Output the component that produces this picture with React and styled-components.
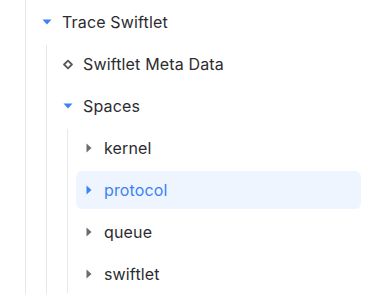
import React from "react";
import styled, { createGlobalStyle } from "styled-components";

const GlobalStyle = createGlobalStyle`
  html, body {
    margin: 0;
    padding: 0;
    background: #ffffff;
  }
  body {
    font-family: Inter, "Noto Sans", sans-serif;
    overflow: hidden;
  }
`;

const Page = styled.div`
  width: 378px;
  height: 294px;
  overflow: hidden;
  padding-left: 25px;
  padding-right: 17px;
  box-sizing: border-box;
`;

const Group = styled.div`
  display: flex;
  flex-direction: column;
  gap: 4px;
  border-left: 1px solid #e8e8ea;
  padding-left: 8px;
  padding-top: ${(p) => p.$top || 0}px;
  margin-left: ${(p) => (p.$nested ? 12 : 0)}px;
  min-height: ${(p) => p.$minHeight || 0}px;
`;

const Row = styled.div`
  display: flex;
  align-items: center;
  gap: 10px;
  height: 38px;
  padding-left: 8px;
  border-radius: 6px;
  background: ${(p) => (p.$active ? "#eef5ff" : "transparent")};
  color: ${(p) => (p.$active ? "#3b82f6" : "#2c2c30")};
  font-size: 16px;
  font-weight: 400;
  letter-spacing: 0.15px;
`;

const IconBox = styled.span`
  width: 10px;
  height: 10px;
  display: flex;
  align-items: center;
  justify-content: center;
  flex: none;
`;

const Caret = ({ open, color }) => (
  <IconBox>
    {open ? (
      <svg width="10" height="6" viewBox="0 0 10 6">
        <path d="M0.5 0.5 L9.5 0.5 L5 5.5 Z" fill={color} />
      </svg>
    ) : (
      <svg width="6" height="10" viewBox="0 0 6 10">
        <path d="M0.5 0.5 L5.5 5 L0.5 9.5 Z" fill={color} />
      </svg>
    )}
  </IconBox>
);

const Diamond = () => (
  <IconBox>
    <svg width="11" height="11" viewBox="0 0 11 11">
      <path
        d="M5.5 1.2 L9.8 5.5 L5.5 9.8 L1.2 5.5 Z"
        fill="none"
        stroke="#5a5a5e"
        strokeWidth="2"
        strokeLinejoin="round"
      />
    </svg>
  </IconBox>
);

const spaces = ["kernel", "protocol", "queue", "swiftlet"];

export default function App() {
  return (
    <>
      <GlobalStyle />
      <Page>
        <Group $top={3} $minHeight={294}>
          <Row>
            <Caret open color="#3b82f6" />
            Trace Swiftlet
          </Row>
          <Group $nested $minHeight={250}>
            <Row>
              <Diamond />
              Swiftlet Meta Data
            </Row>
            <Row>
              <Caret open color="#3b82f6" />
              Spaces
            </Row>
            <Group $nested>
              {spaces.map((name) => (
                <Row key={name} $active={name === "protocol"}>
                  <Caret color={name === "protocol" ? "#3b82f6" : "#6b6b70"} />
                  {name}
                </Row>
              ))}
            </Group>
          </Group>
        </Group>
      </Page>
    </>
  );
}
